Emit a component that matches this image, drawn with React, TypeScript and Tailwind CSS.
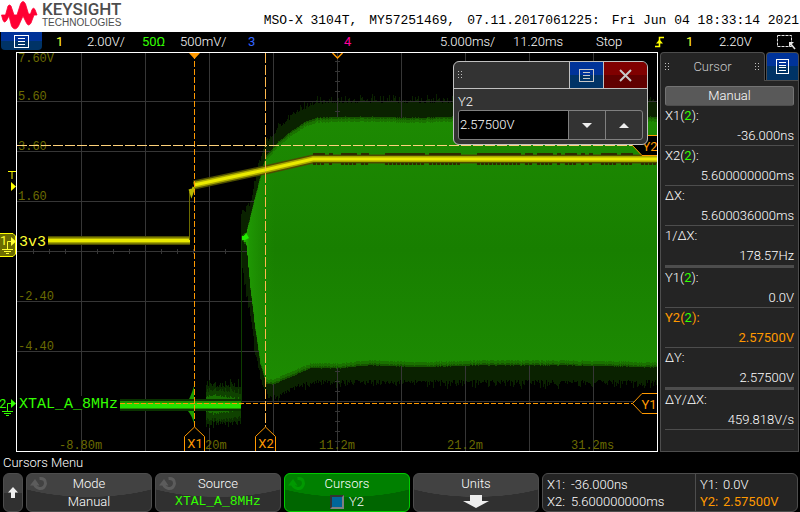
import React from "react";

const UI = "font-['Roboto','Liberation_Sans',sans-serif] font-light";

const LEFT = 17;
const RIGHT = 657;

/** Repeatable pseudo-random value in 0..1 for trace noise. */
function noise(n: number): number {
  const v = Math.sin(n * 127.1 + 11.7) * 43758.5453;
  return v - Math.floor(v);
}

type Point = [number, number];

function sample(points: Point[], x: number): number {
  for (let i = 1; i < points.length; i++) {
    if (x <= points[i][0]) {
      const [x0, y0] = points[i - 1];
      const [x1, y1] = points[i];
      return y0 + ((y1 - y0) * (x - x0)) / (x1 - x0);
    }
  }
  return points[points.length - 1][1];
}

function band(top: Point[], bottom: Point[], from: number, to: number, rough: number, inset = 0): string {
  const upper: string[] = [];
  const lower: string[] = [];
  for (let x = from; x < to; x++) {
    const t = Math.round(sample(top, x) + inset - noise(x) * noise(x + 900) * rough);
    const b = Math.round(sample(bottom, x) - inset + noise(x + 300) * noise(x + 1700) * rough);
    upper.push(`L${x} ${t}H${x + 1}`);
    lower.unshift(`L${x + 1} ${Math.max(b, t)}H${x}`);
  }
  return `M${from} ${sample(top, from)}${upper.join("")}${lower.join("")}Z`;
}

const coreTop: Point[] = [[241, 236], [246, 232], [253, 203], [260, 176], [265, 157], [277, 143], [290, 132], [305, 122], [317, 118], [350, 117], [420, 118], [480, 116], [560, 118], [657, 117]];
const coreBottom: Point[] = [[241, 240], [246, 245], [250, 290], [255, 330], [260, 365], [266, 384], [273, 384], [290, 377], [310, 368], [340, 368], [370, 365], [420, 367], [480, 365], [560, 365], [657, 367]];
const haloTop: Point[] = [[241, 218], [250, 205], [258, 168], [265, 144], [280, 128], [300, 111], [315, 105], [340, 103], [657, 103]];
const haloBottom: Point[] = [[241, 262], [248, 300], [255, 350], [262, 384], [270, 396], [285, 391], [298, 384], [312, 380], [657, 380]];

const haloPath = band(haloTop, haloBottom, 241, RIGHT, 10);
const corePath = band(coreTop, coreBottom, 241, RIGHT, 1);
const midPath = band(coreTop, coreBottom, 244, RIGHT, 2, 2);
const innerPath = band(coreTop, coreBottom, 246, RIGHT, 2, 5);
const burstPath = band([[206, 387], [241, 387]], [[206, 421], [241, 421]], 206, 241, 9);
const burstMid = band([[206, 393], [218, 391], [241, 394]], [[206, 416], [218, 419], [241, 416]], 206, 241, 6);
const burstInner = band([[206, 398], [215, 396], [241, 400]], [[206, 410], [215, 413], [241, 409]], 206, 241, 3);

const specks: number[] = [];
for (let x = 313; x < RIGHT; x += 4) if (noise(x) > 0.35) specks.push(x);

function Plot() {
  return (
    <svg viewBox="0 52 658 400" className="block w-full font-normal" role="img" aria-label="Oscilloscope traces">
      <defs>
        <linearGradient id="glow" x1="0" x2="0" y1="115" y2="385" gradientUnits="userSpaceOnUse">
          <stop offset="0" stopColor="#1d8a02" />
          <stop offset="0.5" stopColor="#187f00" />
          <stop offset="1" stopColor="#1d8c02" />
        </linearGradient>
        <linearGradient id="onset" x1="241" x2="275" y1="0" y2="0" gradientUnits="userSpaceOnUse">
          <stop offset="0" stopColor="#27d000" />
          <stop offset="0.25" stopColor="#219c04" stopOpacity="0.8" />
          <stop offset="1" stopColor="#1c8a00" stopOpacity="0" />
        </linearGradient>
      </defs>
      <rect x="0" y="52" width="658" height="400" fill="#000" />

      <path d={haloPath} fill="#0a2200" />
      <g stroke="#363636" strokeWidth="1" shapeRendering="crispEdges">
        {[81, 145, 209, 273, 337, 401, 465, 529, 593].map((x) => (
          <line key={x} x1={x + 0.5} x2={x + 0.5} y1="53" y2="451" />
        ))}
        {[101, 151, 201, 251, 301, 351, 401].map((y) => (
          <line key={y} x1={LEFT} x2={RIGHT} y1={y + 0.5} y2={y + 0.5} />
        ))}
        {Array.from({ length: 39 }, (_, i) => 61 + i * 10).map((y) => (
          <line key={y} x1="335" x2="340" y1={y + 0.5} y2={y + 0.5} />
        ))}
        {Array.from({ length: 40 }, (_, i) => 33 + i * 16).map((x) => (
          <line key={x} x1={x + 0.5} x2={x + 0.5} y1="249" y2="254" />
        ))}
      </g>

      <g fill="#6b6b00" fontFamily="'Liberation Mono', monospace" fontSize="12">
        <text x="18" y="62">7.60V</text>
        <text x="18" y="100">5.60</text>
        <text x="18" y="150">3.60</text>
        <text x="18" y="200">1.60</text>
        <text x="18" y="300">-2.40</text>
        <text x="18" y="350">-4.40</text>
        <text x="59" y="449">-8.80m</text>
        <text x="205" y="449">20m</text>
        <text x="319" y="449">11.2m</text>
        <text x="447" y="449">21.2m</text>
        <text x="571" y="449">31.2ms</text>
      </g>

      <path d={corePath} fill="#155500" />
      <path d={midPath} fill="#1a7200" />
      <path d={innerPath} fill="url(#glow)" />
      <path d={midPath} fill="url(#onset)" />
      <path d="M241 236H244L246 233L249 238L245 240H241Z" fill="#22ee00" />
      <path d="M241.5 236V405" stroke="#0d3d00" />

      <path d={burstPath} fill="#0a2a00" />
      <path d={burstMid} fill="#0f4200" />
      <path d={burstInner} fill="#177000" />
      <path d="M188 401Q191 396 194 386V423Q191 414 188 411Z" fill="#1c9c00" />
      <rect x="120" y="399" width="121" height="12" fill="#0a3300" />
      <rect x="120" y="401" width="121" height="8" fill="#1c9000" />
      <rect x="120" y="403" width="121" height="5" fill="#26e000" />

      <g fill="none">
        <path d="M48 240.500H190" stroke="#4d4d00" strokeWidth="9" />
        <path d="M48 240.500H190" stroke="#a8a800" strokeWidth="6" />
        <path d="M48 240.500H190" stroke="#eaea00" strokeWidth="3" />
        <path d="M189.500 240V192" stroke="#6b6b00" />
        <path d="M190 189L191.500 194L194 187" stroke="#b8b800" strokeWidth="3" />
        <path d="M194 185L265 170L313 159H657" stroke="#4d4d00" strokeWidth="9" />
        <path d="M194 185L265 170L313 159H657" stroke="#a8a800" strokeWidth="6" />
        <path d="M194 185L265 170L313 159H657" stroke="#eaea00" strokeWidth="3" />
      </g>
      <g fill="#2f2a00">
        {specks.map((x) => (
          <React.Fragment key={x}>
            <rect x={x} y="153" width="4" height="2" />
            <rect x={x} y="163" width="3" height="2" />
          </React.Fragment>
        ))}
      </g>

      <g stroke="#ff9900" shapeRendering="crispEdges">
        <path d="M194.500 53V427" strokeDasharray="6 2" />
        <path d="M265.500 53V427" strokeDasharray="10 2" stroke="#ffb84d" />
        <path d="M17 145.500H633" strokeDasharray="10 2" stroke="#ffd27a" />
        <path d="M120 403.500H633" strokeDasharray="5 2" />
      </g>

      <g fill="#000" stroke="#ff9900">
        <path d="M184.500 451V436.500L194.500 427L204.500 436.500V451" />
        <path d="M255.500 451V436.500L265.500 427L275.500 436.500V451" />
        <path d="M657 393.500H642L632.500 403.500L642 413.500H657" />
        <path d="M657 135.500H642L632.500 145.500L642 155.500H657" />
      </g>
      <g fill="#ff9900" fontFamily="'Roboto', sans-serif" fontSize="13" textAnchor="middle">
        <text x="195" y="448">X1</text>
        <text x="266" y="448">X2</text>
        <text x="649" y="409">Y1</text>
        <text x="650" y="151">Y2</text>
      </g>
      <path d="M189 53H200L194.500 59Z" fill="#ff9900" />
      <path d="M332.500 53L337.500 58L342.500 53" fill="none" stroke="#ff9900" strokeWidth="1.500" />

      <path d="M16.500 452V52.500H657.500V451.500H16.500" fill="none" stroke="#fff" shapeRendering="crispEdges" />

      <g fontFamily="'Liberation Mono', monospace" fontSize="15">
        <rect x="17" y="233" width="31" height="15" fill="#000" />
        <text x="19" y="246" fill="#ffff33">3v3</text>
        <rect x="17" y="396" width="103" height="14" fill="#000" />
        <text x="19" y="408" fill="#33ff00">XTAL_A_8MHz</text>
      </g>

      <path d="M8 171.500H16M12 171.500V179" stroke="#ffff00" fill="none" />
      <path d="M11 182V191L16 186.500Z" fill="#ffff00" />

      <path d="M0 233.500H13L15.500 236V254L13 256.500H0" fill="#6b6b00" stroke="#ffff00" />
      <g fill="none" stroke="#ffff33">
        <path d="M7.500 249V241.500H11M2 249.500H13M4 251.500H11M6 253.500H9" />
        <path d="M11 237L16 241.500L11 246Z" fill="#ffff33" stroke="none" />
      </g>
      <g fill="none" stroke="#33ff00">
        <path d="M7.500 411V403.500H11M2 411.500H13M4 413.500H11M6 415.500H9" />
        <path d="M11 399L16 403.500L11 408Z" fill="#33ff00" stroke="none" />
      </g>
      <g fontFamily="'Roboto', sans-serif" fontSize="13">
        <text x="0" y="245" fill="#ffff33">1</text>
        <text x="-1" y="408" fill="#33ff00">2</text>
      </g>
    </svg>
  );
}

function ListIcon({ color = "#fff", tall = false }: { color?: string; tall?: boolean }) {
  return (
    <svg width="15" height="15" viewBox="0 0 15 15" fill="none" stroke={color} shapeRendering="crispEdges" aria-hidden="true">
      {tall ? (
        <path d="M1.500 .5H13.500V14.500H1.500ZM4 3.500H11M4 6.500H11M4 8.500H11M4 11.500H11" />
      ) : (
        <path d="M.5 1.500H14.500V13.500H.5ZM4 4.500H11M4 7.500H11M4 10.500H11" />
      )}
    </svg>
  );
}

function Grip() {
  return (
    <svg width="5" height="8" viewBox="0 0 5 8" fill="#c0c0c0" shapeRendering="crispEdges" aria-hidden="true">
      <path d="M0 0h1v1H0zM3 0h1v1H3zM0 3h1v1H0zM3 3h1v1H3zM0 6h1v1H0zM3 6h1v1H3z" />
    </svg>
  );
}

const blue = "bg-linear-to-b from-[#003399] from-50% to-[#003366] to-50%";

function Header() {
  return (
    <header className="flex h-8 items-start justify-between bg-white">
      <div className="flex items-start">
        <svg width="39" height="32" viewBox="0 0 39 32" fill="#ff0033" stroke="#ff0033" strokeWidth="0.800" aria-label="Keysight logo" role="img">
          <path d="M1.500 15H5.500L8 6Q9.500 4 11 6L14 15H17L20.500 4Q23-1 25.500 4L28.500 14H30.500L32 9.500Q33.500 7 35 9.500L37 15H34L31 23Q28.500 27 26.500 23L23 16L18.500 26Q15 32 11.500 26L9 16L6.500 20.500Q4.500 23.500 3 20.500Z" />
        </svg>
        <div className="pl-[3px] text-[#4d4d4d]">
          <div className="text-[17px] font-medium leading-[18px]">KEYSIGHT</div>
          <div className="font-['Liberation_Sans',sans-serif] text-[10px] font-normal leading-[10px]">TECHNOLOGIES</div>
        </div>
      </div>
      <div className="flex gap-3 whitespace-nowrap pr-px pt-3 font-['Liberation_Mono',monospace] text-[13px] font-normal leading-[18px] text-black">
        <span>MSO-X 3104T,</span>
        <span>MY57251469,</span>
        <span>07.11.2017061225:</span>
        <span>Fri Jun 04 18:33:14 2021</span>
      </div>
    </header>
  );
}

function StatusBar() {
  return (
    <div className="grid h-5 grid-cols-[56fr_31fr_55fr_38fr_68fr_96fr_96fr_73fr_83fr_59fr_30fr_34fr_58fr_23fr] items-center whitespace-nowrap text-[13px] text-white">
      <button aria-label="Main menu" className={`ml-px mr-[14px] flex h-[18px] items-center justify-center self-start rounded-b-sm ${blue}`}>
        <ListIcon />
      </button>
      <span className="font-normal text-[#ffff33]">1</span>
      <span>2.00V/</span>
      <span className="font-normal text-[#33ff00]">50Ω</span>
      <span>500mV/</span>
      <span className="font-normal text-[#3366ff]">3</span>
      <span className="font-normal text-[#ff0099]">4</span>
      <span>5.000ms/</span>
      <span>11.20ms</span>
      <span>Stop</span>
      <svg width="10" height="12" viewBox="0 0 10 12" fill="none" stroke="#ffff00" aria-label="Rising edge trigger" role="img">
        <path d="M0 10.500H4.500V1.500H9" strokeWidth="1.500" />
        <path d="M1 7.500L4.500 3.500L8 7.500Z" fill="#ffff00" stroke="none" />
      </svg>
      <span className="pl-px font-normal text-[#ffff33]">1</span>
      <span>2.20V</span>
      <svg width="19" height="16" viewBox="0 0 19 16" fill="none" stroke="#e6e6e6" aria-label="Zoom box" role="img">
        <path d="M.5 1.500H14.500V12.500H.5Z" strokeDasharray="3 1" />
        <path d="M13 9L18 15" strokeWidth="1.500" />
        <path d="M12 8H17L12 13Z" fill="#e6e6e6" stroke="none" />
      </svg>
    </div>
  );
}

function EntryDialog() {
  return (
    <section
      aria-label="Y2 entry"
      className="absolute right-[10px] top-[9px] flex h-[84px] w-[195px] flex-col overflow-hidden rounded-md border border-[#c0c0c0] bg-[#333]"
    >
      <div className="flex h-[27px] border-b border-[#c0c0c0]">
        <div className="flex-1 pl-1 pt-[9px]">
          <Grip />
        </div>
        <button aria-label="Menu" className={`flex w-[34px] items-center justify-center border-l border-[#c0c0c0] ${blue}`}>
          <ListIcon color="#c8c8c8" />
        </button>
        <button
          aria-label="Close"
          className="flex w-11 items-center justify-center border-l border-[#c0c0c0] bg-linear-to-b from-[#800000] from-50% to-[#600000] to-50%"
        >
          <svg width="13" height="13" viewBox="0 0 13 13" stroke="#c8c8c8" strokeWidth="2" aria-hidden="true">
            <path d="M1 1L12 12M12 1L1 12" />
          </svg>
        </button>
      </div>
      <label htmlFor="y2" className="h-[21px] pl-1 pt-[5px] text-[13px] leading-4 text-white">
        Y2
      </label>
      <div className="mx-1 flex h-[30px] overflow-hidden rounded-[3px] border border-[#808080]">
        <input id="y2" defaultValue="2.57500V" className="min-w-0 flex-1 bg-black pl-px text-[13px] text-white outline-none" />
        <button aria-label="Decrease" className="flex w-[37px] items-center justify-center border-l border-[#808080]">
          <svg width="10" height="5" viewBox="0 0 10 5" fill="#eee" aria-hidden="true">
            <path d="M0 0H10L5 5Z" />
          </svg>
        </button>
        <button aria-label="Increase" className="flex w-[37px] items-center justify-center border-l border-[#808080]">
          <svg width="10" height="5" viewBox="0 0 10 5" fill="#eee" aria-hidden="true">
            <path d="M0 5H10L5 0Z" />
          </svg>
        </button>
      </div>
    </section>
  );
}

type Reading = { name: string; channel?: string; value: string; active?: boolean; groupEnd?: boolean };

const readings: Reading[] = [
  { name: "X1", channel: "2", value: "-36.000ns" },
  { name: "X2", channel: "2", value: "5.600000000ms" },
  { name: "ΔX", value: "5.600036000ms" },
  { name: "1/ΔX", value: "178.57Hz", groupEnd: true },
  { name: "Y1", channel: "2", value: "0.0V" },
  { name: "Y2", channel: "2", value: "2.57500V", active: true },
  { name: "ΔY", value: "2.57500V", groupEnd: true },
  { name: "ΔY/ΔX", value: "459.818V/s" },
];

function SidePanel() {
  return (
    <aside className="flex w-[139px] flex-none flex-col">
      <div className="flex h-7">
        <div className="flex flex-1 items-center justify-between rounded-t border border-b-0 border-[#4d4d4d] bg-[#242424] px-1 text-[13px] text-[#c8c8c8]">
          <Grip />
          <h2>Cursor</h2>
          <Grip />
        </div>
        <button aria-label="Sidebar menu" className={`ml-px flex w-[33px] items-center justify-center rounded-t border border-b-0 border-[#4d4d4d] ${blue}`}>
          <ListIcon tall />
        </button>
      </div>
      <div className="relative flex-1 border border-t-0 border-[#4d4d4d] bg-[#242424] px-1 pt-[6px]">
        <div className="absolute right-0 top-0 h-px w-[34px] bg-[#4d4d4d]" />
        <button className="block h-5 w-full rounded-[3px] border border-[#737373] border-b-[#4d4d4d] bg-[#595959] text-[13px] leading-[18px] text-white">Manual</button>
        <dl className="text-[13px] leading-5 text-white">
          {readings.map((r) => (
            <div
              key={r.name}
              className={`${r.groupEnd ? "border-b-3" : "border-b"} border-[#4d4d4d] ${r.active ? "font-normal text-[#ff9900]" : ""}`}
            >
              <dt className="h-5">
                {r.name}
                {r.channel && (
                  <>
                    (<span className="font-normal text-[#33ff00]">{r.channel}</span>)
                  </>
                )}
                :
              </dt>
              <dd className="h-[19px] text-right">{r.value}</dd>
            </div>
          ))}
        </dl>
      </div>
    </aside>
  );
}

const softkey =
  "relative flex min-w-0 flex-1 flex-col items-center justify-center rounded-md border text-[13px] leading-[18px] text-white";
const grey =
  "border-[#4d4d4d] bg-[#303030] bg-[radial-gradient(100px_34px_at_50%_-11px,#424242_99%,transparent_100%)]";
const green =
  "border-[#00cc00] bg-[#006600] bg-[radial-gradient(100px_34px_at_50%_-11px,#008000_99%,transparent_100%)]";

function KnobIcon({ color }: { color: string }) {
  return (
    <svg width="18" height="16" viewBox="0 0 18 16" className="absolute left-[3px] top-[2px]" fill="none" aria-hidden="true">
      <path d="M9.500 2.500Q15.500 2 15.500 7.500Q14.500 13 9.500 12.500Q6 12 4.500 8.500" stroke={color} strokeWidth="3" />
      <path d="M0 9.500L5 3L9.500 9.500Z" fill={color} />
    </svg>
  );
}

function Softkeys() {
  return (
    <nav aria-label="Cursors Menu" className="flex h-[39px] gap-[3px] pl-[3px] pr-[2px]">
      <button aria-label="Back" className="flex w-5 items-center justify-center rounded-md border border-[#4d4d4d] bg-linear-to-b from-[#424242] from-50% to-[#303030] to-50%">
        <svg width="10" height="11" viewBox="0 0 10 11" fill="#eee" aria-hidden="true">
          <path d="M5 0L10 5.500H7V11H3V5.500H0Z" />
        </svg>
      </button>
      <button className={`${softkey} ${grey}`}>
        <KnobIcon color="#5c5c5c" />
        <span>Mode</span>
        <span>Manual</span>
      </button>
      <button className={`${softkey} ${grey}`}>
        <KnobIcon color="#5c5c5c" />
        <span>Source</span>
        <span className="font-['Liberation_Mono',monospace] font-normal text-[#33ff00]">XTAL_A_8MHz</span>
      </button>
      <button className={`${softkey} ${green}`}>
        <KnobIcon color="#009900" />
        <span>Cursors</span>
        <span className="flex items-center gap-[5px]">
          <span className="h-[14px] w-[14px] border-2 border-[#333] border-b-[#808080] border-r-[#808080] bg-[#006699]" />
          Y2
        </span>
      </button>
      <button className={`${softkey} ${grey}`}>
        <span>Units</span>
        <span className="flex h-[18px] items-center">
          <svg width="26" height="13" viewBox="0 0 26 13" fill="#eee" aria-hidden="true">
            <path d="M7 0H19V6H26L13 13L0 6H7Z" />
          </svg>
        </span>
      </button>
      <div className="flex w-64 rounded-md border border-[#4d4d4d] bg-[#242424] text-[13px] leading-[17px] text-white">
        <dl className="grid w-[153px] grid-cols-[24px_1fr] content-center border-r border-[#4d4d4d] pl-1">
          <dt>X1:</dt>
          <dd>-36.000ns</dd>
          <dt>X2:</dt>
          <dd>5.600000000ms</dd>
        </dl>
        <dl className="grid flex-1 grid-cols-[23px_1fr] content-center pl-1">
          <dt>Y1:</dt>
          <dd>0.0V</dd>
          <dt className="font-normal text-[#ff9900]">Y2:</dt>
          <dd className="font-normal text-[#ff9900]">2.57500V</dd>
        </dl>
      </div>
    </nav>
  );
}

export default function App() {
  return (
    <div className={`min-h-screen bg-black ${UI}`}>
      <Header />
      <StatusBar />
      <main className="flex pr-px">
        <div className="relative mr-[2px] min-w-0 flex-1">
          <Plot />
          <EntryDialog />
        </div>
        <SidePanel />
      </main>
      <h1 className="h-[21px] pl-[3px] text-[13px] leading-[21px] text-white">Cursors Menu</h1>
      <Softkeys />
    </div>
  );
}
